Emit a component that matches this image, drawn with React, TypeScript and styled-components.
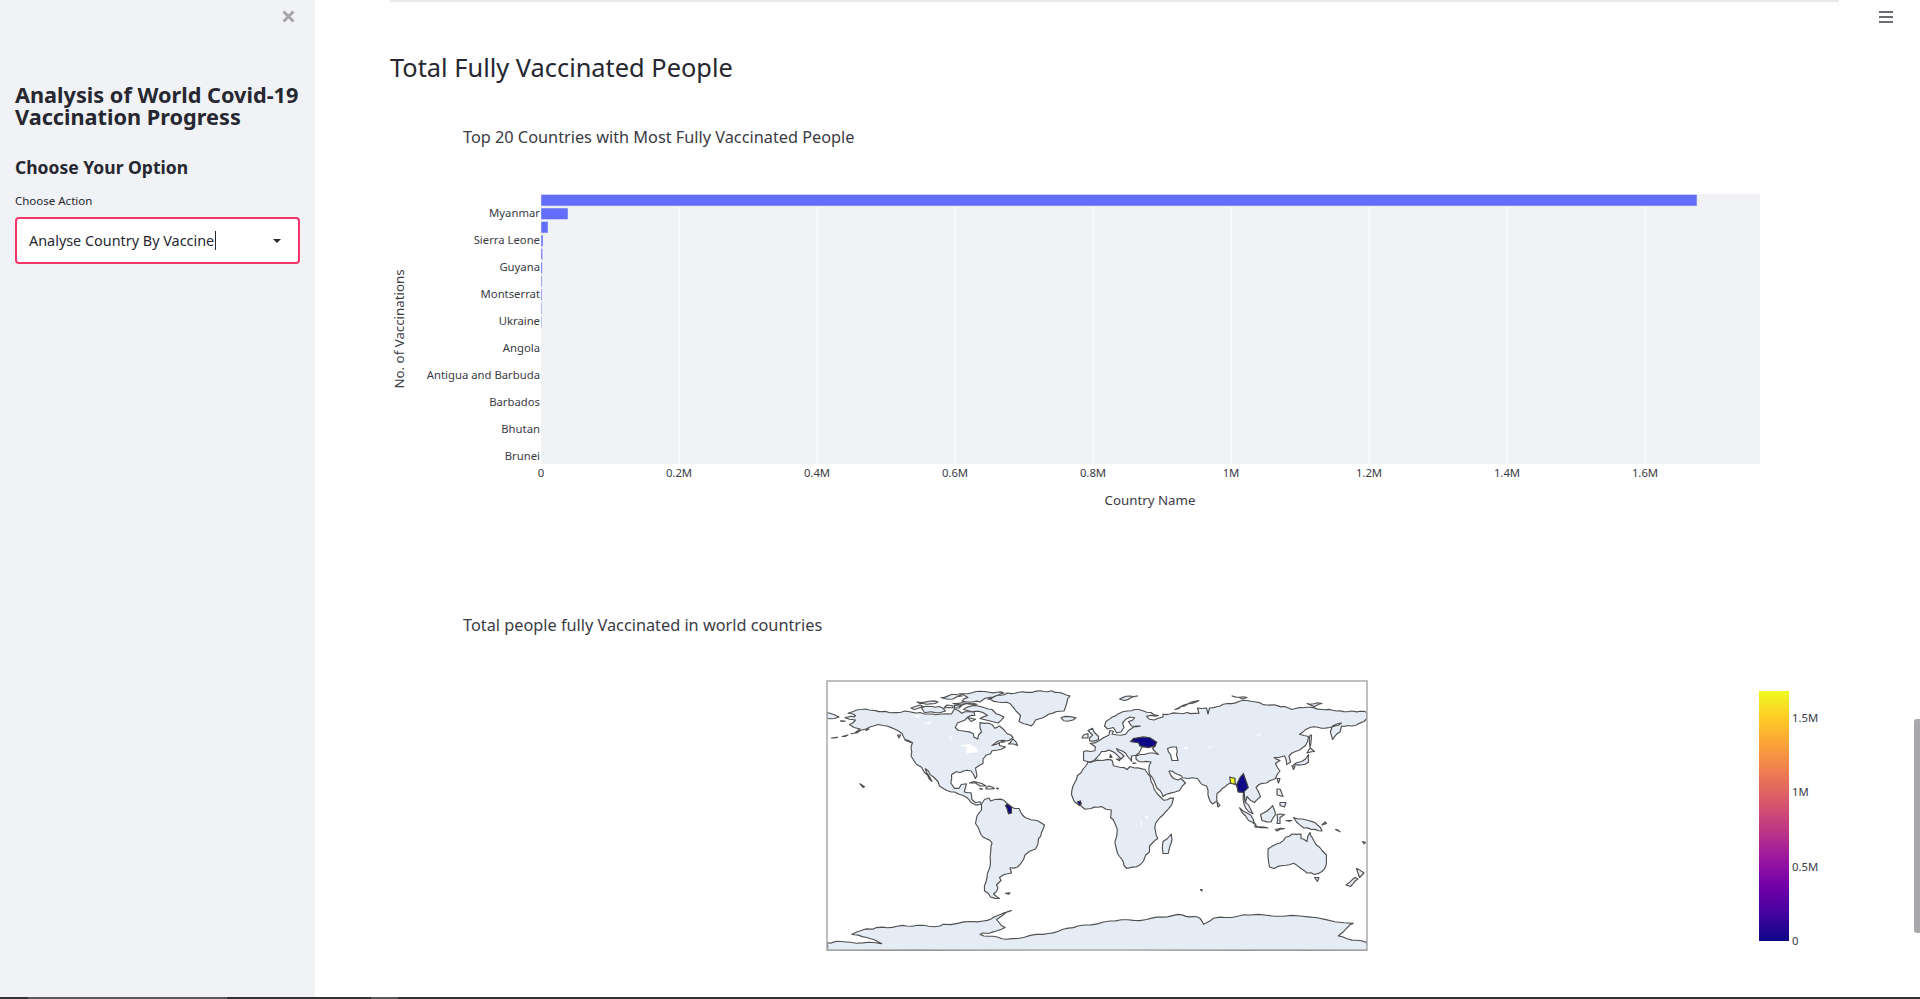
import React from 'react'
import styled, { createGlobalStyle } from 'styled-components'

const FONT = `"Noto Sans", "Open Sans", sans-serif`

const GlobalStyle = createGlobalStyle`
  html, body { margin: 0; padding: 0; background: #fff; overflow: hidden; }
  body { font-family: ${FONT}; color: #262730; }
`

type Pt = [number, number]

// map frame is plain equirectangular, 1.5px per degree
const project = ([lon, lat]: Pt) => `${((lon + 180) * 1.5).toFixed(1)} ${((90 - lat) * 1.5).toFixed(1)}`
const toPath = (pts: Pt[]) => `M${pts.map(project).join('L')}Z`

// low-res natural earth look: break long edges up a little so coasts aren't ruler straight
const roughen = (pts: Pt[]) => {
  const out: Pt[] = []
  pts.forEach((a, i) => {
    const b = pts[(i + 1) % pts.length]
    out.push(a)
    const len = Math.hypot(b[0] - a[0], b[1] - a[1])
    const steps = Math.min(6, Math.floor(len / 2.2))
    for (let s = 1; s < steps; s++) {
      const t = s / steps
      const n = Math.sin(a[0] * 12.9 + a[1] * 78.2 + s * 37.7) * 0.55
      const n2 = Math.cos(a[1] * 31.1 + a[0] * 17.3 + s * 11.3) * 0.55
      out.push([a[0] + (b[0] - a[0]) * t + n, a[1] + (b[1] - a[1]) * t + n2])
    }
  })
  return out
}

const LAND: Pt[][] = [
  // north america
  [[-168,65.5],[-164,66.5],[-162,66],[-161,67],[-166,68.5],[-163,69.5],[-157,71],[-150,70.5],[-141,69.7],[-135,69],[-128,70],[-125,69.5],[-118,69],[-115,68],[-110,68],[-103,68],[-97,68],[-95,71.5],[-92,70],[-90,68.5],[-85,69.5],[-82,69.5],[-81.5,67],[-86,66],[-88,64],[-93,62],[-94.5,59],[-92.5,57],[-88,56.5],[-82.5,55],[-82,52.5],[-79.5,51.3],[-79,54],[-77,56],[-78,59],[-78,62.3],[-73,62],[-70,61],[-68,58.5],[-65,60],[-62,57.5],[-60,55],[-56,52.5],[-60,50],[-66,50],[-70,47],[-65,49],[-65,47],[-61,46],[-64,44.5],[-66,44],[-70,43.5],[-71,41.5],[-74,40.5],[-76,38],[-76,35],[-78,34],[-81,32],[-80,27],[-81,25],[-82.5,28],[-84,30],[-89,30],[-91,29],[-94,29.5],[-97,27.5],[-97.5,22],[-95,18.5],[-92,18.5],[-90.5,21],[-87,21.5],[-88,18],[-88.5,16],[-84,15.5],[-83.5,11],[-81,9],[-78,9.5],[-77,8],[-79,7.5],[-81,7.5],[-84,9],[-87,12.5],[-92,14.5],[-95,16],[-100,17],[-105,20],[-106,23],[-109,26],[-112.5,30],[-114.5,31.5],[-111,25],[-110,23],[-112,25],[-115,29],[-117,32.5],[-120.5,34.5],[-124,40],[-124,46],[-123,49],[-128,51],[-130,55],[-135,58],[-140,60],[-146,61],[-151,59.5],[-154,58],[-160,55.5],[-164,54.8],[-158,58],[-162,59],[-165,61],[-161,64],[-165,64.5]],
  [[-80,73.5],[-76,72.5],[-70,71],[-67,68],[-62,66],[-66,62],[-70,63],[-74,64],[-78,65],[-73,67],[-76,69],[-85,70],[-89,71],[-85,73]],
  [[-117,72],[-112,73],[-105,73],[-101,70],[-105,68.8],[-115,69]],
  [[-90,76.5],[-78,76],[-72,79],[-62,82],[-75,83],[-92,81.5],[-86,79]],
  [[-124,72],[-118,74],[-116,73],[-120,71.5],[-122,71]],
  [[-96,75],[-90,75.5],[-82,75],[-80,74.5],[-92,74.3]],
  [[-120,76],[-112,76.5],[-106,76],[-108,75],[-118,75]],
  [[-100,74],[-96,73.5],[-96,72],[-102,72]],
  [[-95,74],[-90,73.8],[-92,72],[-95,72]],
  [[-86,65.5],[-81,64.5],[-84,63]],
  [[-104,79],[-94,81],[-90,80],[-96,78]],
  [[-59,48],[-53,47],[-54,49.5],[-56,51.5]],
  [[-64,50],[-61.5,49.5],[-64,49]],
  [[-85,22],[-82,23],[-78,22],[-74,20],[-78,20],[-81,22]],
  [[-74,19],[-72,20],[-69,19],[-68.5,18.3],[-71,18],[-74,18]],
  [[-78,18.4],[-76.3,18],[-78,17.9]],
  [[-67,18.4],[-65.6,18.4],[-66,18]],
  [[-133,54],[-131,54],[-132,52]],
  [[-128,50.5],[-124,49],[-126,50.5]],
  [[-170,53],[-166,54],[-168,53]],
  [[-177,52],[-173,52.4],[-175,52]],
  [[-154,57.6],[-152,58],[-154,57]],
  [[-171,63.5],[-168,63.3],[-170,63]],
  // greenland, iceland
  [[-73,78],[-66,76],[-58,75],[-54,70],[-51,67],[-52,63],[-44,60],[-41,64],[-32,68],[-22,70],[-20,76],[-18,80],[-30,83.5],[-45,82.5],[-60,82]],
  [[-24,65.5],[-18,66.3],[-14,65.5],[-16,64],[-22,63.5]],
  // south america
  [[-77,8],[-75,11],[-72,12],[-71,10],[-68,11],[-62,10.5],[-60,8.5],[-57,6],[-52,5],[-50,1],[-48,-1],[-44,-2.5],[-40,-3],[-35,-6],[-37,-11],[-39,-15],[-39.5,-19],[-41,-22],[-45,-23.5],[-48,-26],[-49,-29],[-53,-34],[-58,-34.5],[-57,-38],[-62,-39],[-65,-41],[-64,-43],[-67,-46],[-66,-48],[-69,-52],[-65,-55],[-71,-54],[-75,-50],[-74,-44],[-73,-38],[-71,-30],[-70,-18],[-76,-14],[-79,-8],[-81,-5],[-80,0],[-77,4]],
  [[-61,-51.5],[-58,-51.2],[-59,-52.2]],
  // africa
  [[-6,36],[3,37],[10,37.3],[11,33.5],[15,32.5],[20,31],[22,33],[25,32],[32,31],[34,28],[36,23],[38,18],[40,15],[43,12],[44.5,10.5],[51,12],[50,8],[47,4],[42,-1],[39,-5],[39,-10],[40.5,-15],[35,-20],[35,-24],[32.5,-26],[31,-30],[26,-34],[20,-35],[18,-33],[15,-27],[12,-17],[13.5,-10],[12,-5],[9,-1],[9.5,4],[6,4.5],[3,6.3],[-4,5],[-8,4.5],[-13,8],[-16,11.5],[-17,14.5],[-16,20],[-13,27],[-9.5,31],[-7,34]],
  [[49.5,-12],[50,-16],[47.5,-25],[44,-25],[43.5,-21],[44,-17],[47,-15]],
  // eurasia
  [[-9,37],[-9,43],[-1.5,43.5],[-1,46],[-4.5,48.5],[1,50],[4,52],[8,54],[8.5,57],[11,56.5],[10,54.5],[14,54],[19,54.5],[21,57],[24,59],[29,60],[23,60],[21,63],[25,65.5],[22,66],[17,62],[18,59],[16,56],[13,55.5],[11,59],[7,58],[5,60],[6,63],[14,68],[20,70],[25,71],[31,70],[36,69],[41,67],[33,66.5],[35,64.5],[38,64],[44,66],[44,68],[54,68.5],[60,69],[68,68.5],[67,72],[73,72],[74,68],[75,72],[80,73],[87,75],[100,77],[106,76],[113,74],[125,73],[130,71],[140,72.5],[150,71],[160,70],[170,70],[180,69],[180,65],[178,63],[170,60],[163,60],[162,56],[157,51],[155.5,56],[157,60],[163,62],[155,59],[142,59],[135,54.5],[141,53],[139,47],[135,44],[130,42],[128,40],[129,36],[126.5,34.3],[126,38],[125,40],[121,39],[118,39],[122,37],[119,35],[122,30],[119,25],[113,22],[108,21],[106,19],[109,13],[105,9],[100,13],[99,9],[104,1.5],[101,3],[98,8],[98,16],[94,16],[92,22],[87,21],[82,16.5],[80,15],[80,10],[77,8],[74,14],[73,20],[70,21],[67,25],[61,25],[57,25.5],[56,27],[50,30],[48,30],[51,25],[54,24],[56,25],[59,22],[55,17],[52,16],[44,13],[42,17],[39,21],[35,28],[34.5,31],[36,36],[30,36],[26,38],[26,40],[29,41],[35,42],[41,41],[37,45],[39,47],[33,46],[30,46],[28,42],[26,40.5],[23,40],[23,36.5],[19,42],[13,45],[18,40],[16,38],[12,42],[8,44],[3,43],[0,39],[-2,37],[-5,36]],
  [[-180,69],[-175,67.5],[-172,66],[-175,65],[-180,65]],
  [[-5,50],[1,51],[1,53],[-2,56],[-3,58.5],[-6,57],[-3,54],[-5,52]],
  [[-10,52],[-6,52],[-6,55],[-9,54]],
  [[15,78],[22,80],[27,80],[18,77]],
  [[52,71],[58,74],[68,77],[56,73]],
  [[90,80],[100,79],[97,78]],
  [[140,75],[150,75],[145,73]],
  [[9,41],[10,39],[8.5,39]],
  [[13,38],[15.5,38],[15,36.8]],
  [[24,35.5],[26,35.2],[24,35]],
  [[131,34],[136,34],[141,36],[141,41],[139,38],[133,35.5]],
  [[130,33.5],[132,33],[131,31]],
  [[140,42],[145,43],[142,45.5]],
  [[142,46],[143,54],[142,54]],
  [[120,25],[122,25],[121,22]],
  [[80,9.5],[82,7],[80.5,6]],
  [[95,5.5],[100,2],[104,-2],[106,-6],[101,-3],[97,2]],
  [[105,-6.5],[114,-8],[106,-7.5]],
  [[109,1],[113,3],[117,7],[119,1],[116,-4],[110,-3]],
  [[120,1],[125,1],[122,-1],[122,-5],[120,-5]],
  [[120,18],[122,18],[124,13],[120,14]],
  [[122,9],[126,9],[125,6],[122,7]],
  [[131,-1],[137,-2],[141,-3],[147,-6],[150,-10],[143,-9],[138,-8],[133,-4]],
  [[119,-9],[125,-8.5],[120,-10]],
  [[126,-3],[130,-3],[128,-3.5]],
  [[114,-22],[117,-20],[122,-18],[126,-14],[130,-12],[136,-12],[136,-15],[140,-17],[142,-11],[146,-19],[150,-23],[153,-26],[153,-31],[150,-37],[145,-39],[140,-38],[136,-35],[131,-31.5],[124,-33],[118,-35],[115,-34],[114,-26]],
  [[145,-41],[148,-41],[147,-43.5]],
  [[173,-35],[178,-38],[175,-41],[174,-38]],
  [[172,-41],[174,-42],[169,-47],[166,-46]],
  [[152,-4],[153,-5],[150,-6]],
  [[160,-9],[162,-10.5],[159,-9]],
  [[177,-17],[179,-17.5],[178,-18.5]],
  [[69,-49],[70,-49],[70,-50]],
  [[-158,21.5],[-155,19.5],[-156,19]],
  // antarctica, traced off the reference
  [[-180,-84.4],[-169,-83.8],[-143.6,-85.1],[-153.5,-81],[-163.5,-78.9],[-158,-76.7],[-147,-74.4],[-127,-73.3],[-104.7,-73.3],[-102.4,-72.2],[-75.8,-70],[-67,-66.7],[-57,-63],[-63.5,-66.7],[-67,-69],[-61.3,-74.4],[-67,-76.7],[-78,-78.9],[-60,-82.2],[-35.8,-78.9],[-15.8,-74.4],[8.7,-70],[33,-69],[54,-65.6],[68.7,-68.2],[70.9,-72.2],[77.6,-68.2],[102,-66],[135.3,-66.7],[170.9,-71.6],[160.9,-80],[180,-84.4],[180,-90],[-180,-90]],
]

const LAKES: Pt[][] = [
  [[-92,47],[-85,48],[-80,45],[-79,43],[-83,42],[-87,42],[-87,46]],
  [[-123,67],[-118,67],[-119,65.5]],
  [[-116,62],[-110,62.5],[-112,61]],
  [[-99,53],[-97,53],[-97,50.5]],
  [[32,0],[34,0],[33,-2.5]],
  [[29,-4],[30,-4],[30,-8]],
  [[104,52],[109,55],[109,54]],
  [[74,46],[78,47],[75,45.5]],
  [[58,46],[61,46],[59,44]],
]

const CASPIAN: Pt[] = [[47,45],[53,46],[53,41],[54,37],[50,37],[49,41]]

const TRACES: { fill: string; pts: Pt[] }[] = [
  { fill: '#0d0887', pts: [[-60,8],[-57,6],[-57,2],[-59,1.5],[-60,5],[-61,7]] },
  { fill: '#0d0887', pts: [[-13,9.5],[-11,10],[-10.5,8],[-12,7]] },
  { fill: '#0d0887', pts: [[22.4,49.6],[24.2,51.6],[30.9,52.7],[35.3,52.2],[39.8,49.3],[38.7,46.7],[34.2,45.6],[28.7,46.7],[27.6,48.9]] },
  { fill: '#0d0887', pts: [[93.1,21.1],[95.3,25.6],[97.6,28.2],[99.8,22.2],[100.9,18.9],[98,16.2],[98.9,8.9],[97.6,15.6],[94.2,16.2]] },
  { fill: '#f0f921', pts: [[88.5,26],[92,25],[92,21],[89,22]] },
]

const COUNTRY_TICKS = ['Myanmar', 'Sierra Leone', 'Guyana', 'Montserrat', 'Ukraine', 'Angola', 'Antigua and Barbuda', 'Barbados', 'Bhutan', 'Brunei']
const VALUE_TICKS = ['0', '0.2M', '0.4M', '0.6M', '0.8M', '1M', '1.2M', '1.4M', '1.6M']
// bar lengths in px, from longest down
const BARS = [1156, 27, 7, 2, 1.6, 1.2, 1, 1, 0.8, 0.6]
const PLASMA = ['#0d0887', '#46039f', '#7201a8', '#9c179e', '#bd3786', '#d8576b', '#ed7953', '#fb9f3a', '#fdca26', '#f0f921']
const COLOR_TICKS: [string, number][] = [['1.5M', 137], ['1M', 211], ['0.5M', 286], ['0', 360]]

const BarChart = () => (
  <ChartSvg viewBox="0 0 1449 450" height={450}>
    <ChartTitle x={73} y={49}>Top 20 Countries with Most Fully Vaccinated People</ChartTitle>
    <rect x={151} y={100} width={1219} height={270} fill="#f0f2f6" />
    {VALUE_TICKS.map((t, i) => (
      <g key={t}>
        {i > 0 && <line x1={151 + i * 138} x2={151 + i * 138} y1={100} y2={370} stroke="#fff" />}
        <TickLabel x={151 + i * 138} y={383} textAnchor="middle">{t}</TickLabel>
      </g>
    ))}
    {BARS.map((w, i) => (
      <rect key={i} x={151} y={100.5 + i * 13.5} width={w} height={11.5} fill="#636efa" stroke="#e5ecf6" strokeWidth={0.5} />
    ))}
    {COUNTRY_TICKS.map((c, i) => (
      <TickLabel key={c} x={150} y={123 + i * 27} textAnchor="end">{c}</TickLabel>
    ))}
    <AxisTitle x={760} y={411} textAnchor="middle">Country Name</AxisTitle>
    <AxisTitle transform="translate(14 235) rotate(-90)" x={0} y={0} textAnchor="middle">No. of Vaccinations</AxisTitle>
  </ChartSvg>
)

const WorldMap = () => (
  <ChartSvg viewBox="0 0 1449 417" height={417}>
    <defs>
      <linearGradient id="plasma" x1="0" y1="1" x2="0" y2="0">
        {PLASMA.map((c, i) => (
          <stop key={c} offset={i / (PLASMA.length - 1)} stopColor={c} />
        ))}
      </linearGradient>
    </defs>
    <ChartTitle x={73} y={50}>Total people fully Vaccinated in world countries</ChartTitle>
    <svg x={437} y={100} width={540} height={270} viewBox="0 0 540 270">
      {LAND.map((pts, i) => (
        <path key={i} d={toPath(roughen(pts))} fill="#e5ecf6" stroke="#4f4f4f" strokeWidth={1.15} strokeLinejoin="round" />
      ))}
      <path d={toPath(roughen(CASPIAN))} fill="#fff" stroke="#4f4f4f" strokeWidth={1.15} />
      {LAKES.map((pts, i) => (
        <path key={i} d={toPath(pts)} fill="#fff" />
      ))}
      {TRACES.map((t, i) => (
        <path key={i} d={toPath(t.pts)} fill={t.fill} stroke="#444" strokeWidth={1.15} />
      ))}
    </svg>
    <rect x={437} y={100} width={540} height={269} fill="none" stroke="#aaa" strokeWidth={1.5} />
    <rect x={1369} y={110} width={30} height={250} fill="url(#plasma)" />
    {COLOR_TICKS.map(([t, y]) => (
      <TickLabel key={t} x={1402} y={y + 4}>{t}</TickLabel>
    ))}
  </ChartSvg>
)

const App = () => (
  <>
    <GlobalStyle />
    <Page>
      <Body>
        <Sidebar>
          <CloseRow>
            <svg width="13" height="13" viewBox="0 0 13 13">
              <path d="M1.5 1.5l10 10M11.5 1.5l-10 10" stroke="#a6a6ab" strokeWidth="3" />
            </svg>
          </CloseRow>
          <AppTitle>Analysis of World Covid-19 Vaccination Progress</AppTitle>
          <OptionTitle>Choose Your Option</OptionTitle>
          <FieldLabel>Choose Action</FieldLabel>
          <SelectBox>
            <SelectValue>Analyse Country By Vaccine</SelectValue>
            <Caret />
            <svg width="8" height="4" viewBox="0 0 8 4">
              <path d="M0 0h8L4 4z" fill="#262730" />
            </svg>
          </SelectBox>
        </Sidebar>
        <Main>
          <Rule />
          <SectionTitle>Total Fully Vaccinated People</SectionTitle>
          <BarChart />
          <ChartGap />
          <WorldMap />
          <MenuButton aria-label="menu">
            <svg width="14" height="12" viewBox="0 0 14 12">
              <path d="M0 1h14M0 6h14M0 11h14" stroke="#3a3b45" strokeWidth="1.7" />
            </svg>
          </MenuButton>
          <ScrollThumb />
        </Main>
      </Body>
      <TaskBar>
        <TaskSegment $start={28} $width={199} />
        <TaskSegment $start={144} $width={27} />
      </TaskBar>
    </Page>
  </>
)

const Page = styled.div`
  width: 1920px;
  height: 999px;
  display: flex;
  flex-direction: column;
  overflow: hidden;
`
const Body = styled.div`
  flex: 1;
  min-height: 0;
  display: flex;
`
const Sidebar = styled.aside`
  width: 315px;
  flex: none;
  box-sizing: border-box;
  padding: 10px 15px 0;
  background: #f0f2f6;
  display: flex;
  flex-direction: column;
`
const CloseRow = styled.div`
  height: 13px;
  display: flex;
  justify-content: flex-end;
  padding-right: 5px;
`
const AppTitle = styled.h1`
  margin: 61px 0 0;
  font-size: 21.7px;
  line-height: 22px;
  font-weight: 700;
  color: #262730;
`
const OptionTitle = styled.h2`
  margin: 27px 0 0;
  font-size: 17.5px;
  line-height: 24px;
  font-weight: 700;
  color: #262730;
`
const FieldLabel = styled.label`
  margin-top: 14px;
  font-size: 11.5px;
  line-height: 16px;
  color: #262730;
`
const SelectBox = styled.div`
  margin-top: 8px;
  height: 47px;
  box-sizing: border-box;
  border: 2px solid #f63366;
  border-radius: 4px;
  background: #fff;
  display: flex;
  align-items: center;
  padding: 0 17px 0 12px;
`
const SelectValue = styled.span`
  font-size: 14.4px;
  color: #262730;
`
const Caret = styled.span`
  width: 1px;
  height: 19px;
  margin-left: 1px;
  margin-right: auto;
  background: #262730;
`
const Main = styled.main`
  position: relative;
  flex: 1;
  min-width: 0;
  box-sizing: border-box;
  padding: 0 81px 0 75px;
  overflow: hidden;
`
const Rule = styled.div`
  height: 2px;
  background: #e8e8e8;
`
const SectionTitle = styled.h2`
  margin: 46px 0 0;
  height: 46px;
  font-size: 25.4px;
  line-height: 38px;
  font-weight: 400;
  color: #262730;
`
const ChartSvg = styled.svg`
  display: block;
  width: 1449px;
  flex: none;
  overflow: visible;
`
const ChartGap = styled.div`
  height: 37px;
`
const ChartTitle = styled.text`
  font-family: ${FONT};
  font-size: 16.3px;
  fill: #3a3b45;
`
const TickLabel = styled.text`
  font-family: ${FONT};
  font-size: 11.3px;
  fill: #3a3b45;
`
const AxisTitle = styled.text`
  font-family: ${FONT};
  font-size: 13.3px;
  fill: #3a3b45;
`
const MenuButton = styled.button`
  position: absolute;
  top: 11px;
  right: 27px;
  padding: 0;
  border: 0;
  background: none;
  display: flex;
`
const ScrollThumb = styled.div`
  position: absolute;
  top: 719px;
  right: 0;
  width: 6px;
  height: 214px;
  border-radius: 3px 0 0 3px;
  background: #a9a9ad;
`
const TaskBar = styled.div`
  height: 2px;
  flex: none;
  background: #333;
  display: flex;
`
const TaskSegment = styled.div<{ $start: number; $width: number }>`
  margin-left: ${(p) => p.$start}px;
  width: ${(p) => p.$width}px;
  background: #5a5a5a;
`

export default App
